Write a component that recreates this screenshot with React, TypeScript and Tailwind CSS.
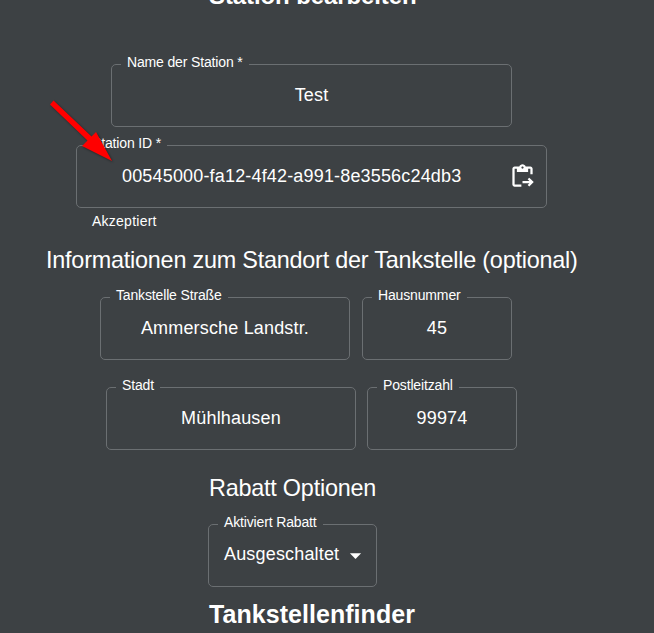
import type { ReactNode } from "react";

type FieldProps = {
  label: string;
  value: string;
  width: string;
  inner?: string;
  children?: ReactNode;
};

function Field({ label, value, width, inner = "justify-center", children }: FieldProps) {
  return (
    <div className={`relative flex h-[63px] shrink-0 items-center rounded-[5px] border border-[#6b6f72] ${width} ${inner}`}>
      <label className="absolute -top-[12px] left-[9px] bg-[#3d4144] px-[6px] text-[14px] leading-[18px] tracking-[-0.15px] whitespace-nowrap">
        {label}
      </label>
      <span className="pb-[2px] text-[18px] leading-[26px] tracking-[0.00938em] whitespace-nowrap">{value}</span>
      {children}
    </div>
  );
}

function PasteIcon() {
  return (
    <svg viewBox="0 0 24 24" className="size-[27px] shrink-0" fill="currentColor">
      <path d="M5 5h2v3h10V5h2v5h2V5c0-1.1-.9-2-2-2h-4.18C14.4 1.84 13.3 1 12 1s-2.4.84-2.82 2H5c-1.1 0-2 .9-2 2v14c0 1.1.9 2 2 2h6v-2H5V5zm7-2c.55 0 1 .45 1 1s-.45 1-1 1-1-.45-1-1 .45-1 1-1z" />
      <path d="m18.01 13-1.42 1.41 1.58 1.58H12v2h6.17l-1.58 1.59 1.42 1.41 3.99-4z" />
    </svg>
  );
}

export default function App() {
  return (
    <main className="relative h-[633px] w-[654px] overflow-hidden bg-[#3d4144] font-['Liberation_Sans',Arial,sans-serif] text-white">
      <div className="flex flex-col items-start">
        <h2 className="-mt-[20px] ml-[209px] h-[32px] text-[24px] leading-[32px] font-bold tracking-[-0.1px] whitespace-nowrap">Station bearbeiten</h2>
        <div className="mt-[52px] ml-[111px]">
          <Field label="Name der Station *" value="Test" width="w-[401px]" />
        </div>
        <div className="mt-[18px] ml-[76px]">
          <Field
            label="Station ID *"
            value="00545000-fa12-4f42-a991-8e3556c24db3"
            width="w-[471px]"
            inner="justify-between pl-[45px] pr-[10px]"
          >
            <PasteIcon />
          </Field>
        </div>
        <p className="mt-[4px] ml-[92px] text-[14px] leading-[19px] tracking-[0.25px]">Akzeptiert</p>
        <h3 className="mt-[13px] ml-[46px] text-[23.4px] leading-[32px] tracking-[-0.22px] whitespace-nowrap">
          Informationen zum Standort der Tankstelle (optional)
        </h3>
        <div className="mt-[21px] ml-[100px] flex gap-3">
          <Field label="Tankstelle Straße" value="Ammersche Landstr." width="w-[250px]" />
          <Field label="Hausnummer" value="45" width="w-[150px]" />
        </div>
        <div className="mt-[27px] ml-[106px] flex gap-[11px]">
          <Field label="Stadt" value="Mühlhausen" width="w-[250px]" />
          <Field label="Postleitzahl" value="99974" width="w-[150px]" />
        </div>
        <h3 className="mt-[22px] ml-[209px] text-[23.4px] leading-[32px] tracking-[-0.22px] whitespace-nowrap">Rabatt Optionen</h3>
        <div className="mt-[20px] ml-[208px]">
          <Field label="Aktiviert Rabatt" value="Ausgeschaltet" width="w-[169px]" inner="justify-between pl-[15px] pr-[7px] pb-[2px]">
            <svg viewBox="0 0 24 24" className="mt-[2px] size-[27px] shrink-0" fill="currentColor">
              <path d="m7 10 5 5 5-5z" />
            </svg>
          </Field>
        </div>
        <h2 className="mt-[11px] ml-[209px] text-[25px] leading-[32px] font-bold tracking-[0.05px] whitespace-nowrap">Tankstellenfinder</h2>
      </div>
      <svg className="absolute top-[95px] left-[44px] h-[72px] w-[74px] drop-shadow-[1px_1px_1px_rgba(0,0,0,0.45)]" viewBox="44 95 74 72">
        <path d="M53.5 100.5 50 104.5 87.5 140.5 82 146 112 161 96 132 91.5 136.5Z" fill="#ff0000" />
      </svg>
    </main>
  );
}
